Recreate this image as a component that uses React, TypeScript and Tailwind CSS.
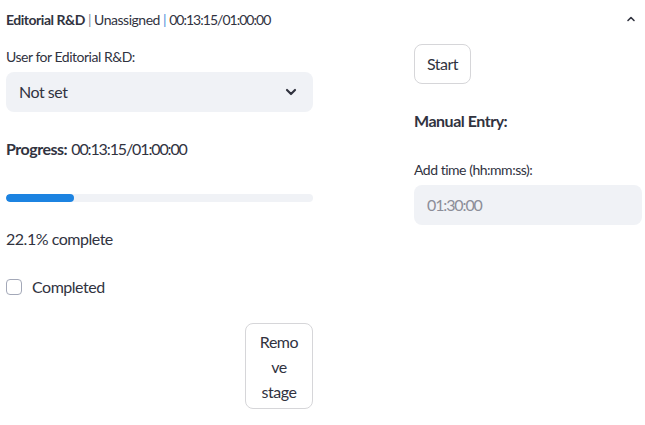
import React from "react";

function Chevron({ up, size = 12 }: { up?: boolean; size?: number }) {
  return (
    <svg width={size} height={size} viewBox="0 0 24 24" fill="none" stroke="#31333F" strokeWidth="3.2" strokeLinecap="round" strokeLinejoin="round">
      {up ? <path d="M6 15l6-6 6 6" /> : <path d="M6 9l6 6 6-6" />}
    </svg>
  );
}

export default function App() {
  const percent = 22.1;

  return (
    <div className="w-[645px] h-[425px] bg-white text-[#31333F] overflow-hidden tracking-[-0.03em]" style={{ fontFamily: "Lato, 'Source Sans Pro', sans-serif" }}>
      {/* Expander header */}
      <div className="flex items-center justify-between h-[38px] pl-[6px] pr-[8px] text-[14px]">
        <div>
          <span className="font-bold">Editorial R&amp;D</span>
          <span className="text-[#8a8c96]"> | </span>
          Unassigned
          <span className="text-[#4a90d9]"> | </span>
          <span className="tracking-[-0.07em]">00:13:15/01:00:00</span>
        </div>
        <Chevron up />
      </div>

      <div className="flex pl-[6px] pr-[3px] pt-[6px] gap-[101px]">
        {/* Left column */}
        <div className="w-[307px] flex flex-col">
          <label className="h-[24px] flex items-center text-[14px] mb-[4px]">User for Editorial R&amp;D:</label>
          <div className="h-[40px] rounded-lg bg-[#f0f2f6] flex items-center justify-between pl-[13px] pr-[14px] text-[16px]">
            <span>Not set</span>
            <Chevron size={16} />
          </div>

          <div className="mt-[25px] h-[24px] flex items-center text-[16px]">
            <span className="font-bold mr-[4px]">Progress:</span>
            <span className="tracking-[-0.07em]">00:13:15/01:00:00</span>
          </div>

          <div className="mt-[33px] h-[8px] rounded-full bg-[#f0f2f6] overflow-hidden">
            <div className="h-full rounded-full bg-[#1c83e1]" style={{ width: `${percent}%` }} />
          </div>

          <div className="mt-[25px] h-[24px] flex items-center text-[16px]">{percent}% complete</div>

          <label className="mt-[24px] h-[24px] flex items-center gap-[10px] text-[16px]">
            <span className="w-[16px] h-[16px] rounded-[4px] border border-[#a3a8b8] bg-white" />
            Completed
          </label>

          <div className="mt-[24px] flex justify-end">
            <button className="w-[68px] h-[86px] rounded-lg border border-[#d6d6d9] bg-white text-[16px] leading-[25px] text-center">
              Remo<br />ve<br />stage
            </button>
          </div>
        </div>

        {/* Right column */}
        <div className="w-[228px] flex flex-col items-start">
          <button className="h-[40px] w-[57px] rounded-lg border border-[#d6d6d9] bg-white text-[16px]">Start</button>

          <div className="mt-[25px] h-[24px] flex items-center text-[16px] font-bold">Manual Entry:</div>

          <label className="mt-[24px] h-[24px] flex items-center text-[14px] mb-[4px]">Add time (hh:mm:ss):</label>
          <div className="w-full h-[40px] rounded-lg bg-[#f0f2f6] flex items-center pl-[13px] text-[16px] text-[#8c8e99]">
            <span className="tracking-[-0.07em]">01:30:00</span>
          </div>
        </div>
      </div>
    </div>
  );
}
